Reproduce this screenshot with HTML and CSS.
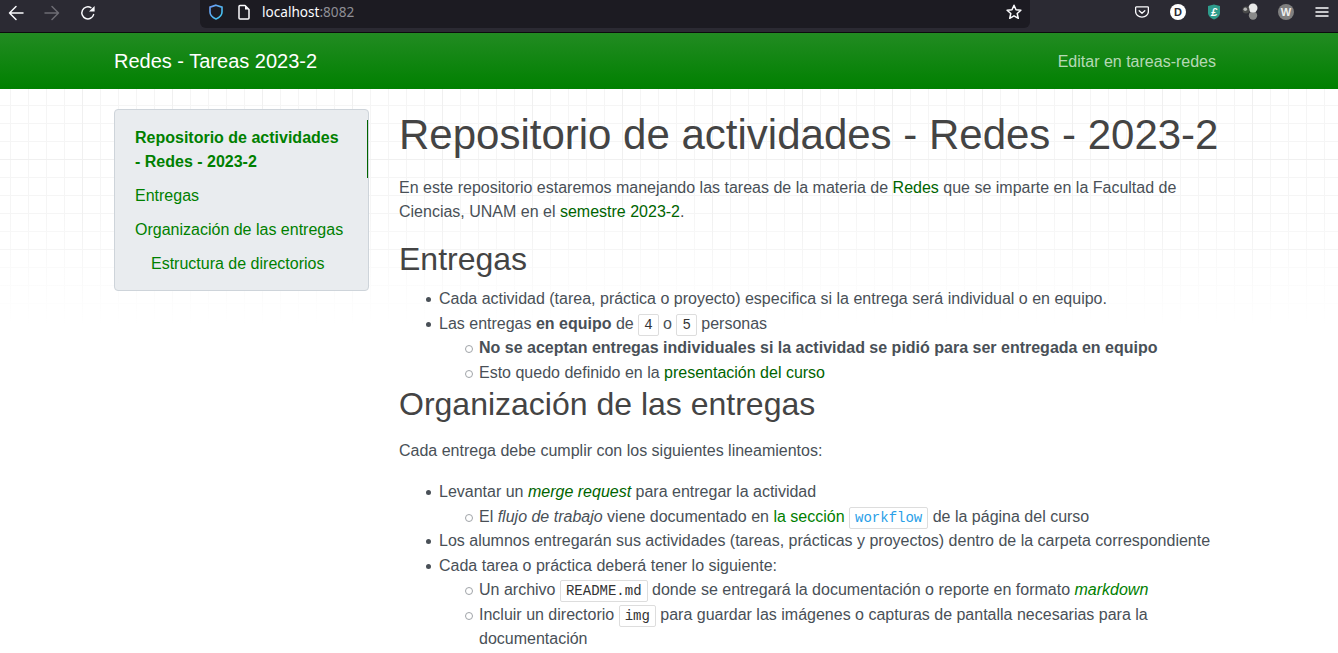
FILE: index.html
```html
<!DOCTYPE html>
<html lang="es">
<head>
<meta charset="utf-8">
<title>Redes - Tareas 2023-2</title>
<link rel="stylesheet" href="styles.css">
</head>
<body>
<div class="browser-bar">
  <span class="tool"><svg width="16" height="16" viewBox="0 0 16 16" class="ico"><path d="M15 8H1.500M8 1.500 1.500 8 8 14.500"/></svg></span>
  <span class="tool"><svg width="16" height="16" viewBox="0 0 16 16" class="ico dim"><path d="M1 8h13.500M8 1.500 14.500 8 8 14.500"/></svg></span>
  <span class="tool"><svg width="16" height="16" viewBox="0 0 16 16" class="ico"><path d="M13.600 9.600A6 6 0 1 1 10.900 2.700"/><path class="fill" d="M14.600 1v5.600H9z"/></svg></span>
  <div class="urlbar">
    <svg width="16" height="16" viewBox="0 0 16 16" class="shield"><defs><linearGradient id="sg" x1="0" y1="0" x2="1" y2="1"><stop offset="0" stop-color="#6f9cf5"/><stop offset="1" stop-color="#3cc8ee"/></linearGradient></defs><path stroke="url(#sg)" d="M8 1.200 14 3.200V8c0 3.400-2.600 5.600-6 7-3.400-1.400-6-3.600-6-7V3.200z"/></svg>
    <svg width="16" height="16" viewBox="0 0 16 16" class="ico doc"><path d="M3 2.500A1 1 0 0 1 4 1.500h5l4 4v8.500a1 1 0 0 1-1 1H4a1 1 0 0 1-1-1z"/><path class="fill" d="M9 1.500l4 4H9z"/></svg>
    <span class="url">localhost<span class="port">:8082</span></span>
    <svg width="16" height="16" viewBox="0 0 16 16" class="ico star"><path d="M8 1.200 10 5.700l4.900.5-3.700 3.300 1.100 4.800L8 11.800l-4.300 2.500 1.100-4.800L1.100 6.200 6 5.700z"/></svg>
  </div>
  <span class="tool ext"><svg width="14" height="14" viewBox="0 0 16 16" class="ico"><path d="M1.500 2.200h13a.8.8 0 0 1 .8.8v4.500c0 3.700-3.300 6.300-7.300 6.300S.7 11.200.7 7.500V3a.8.8 0 0 1 .8-.8z"/><path d="M4.800 6.500 8 9.500l3.200-3"/></svg></span>
  <span class="tool ext"><span class="badge white">D</span></span>
  <span class="tool ext"><svg width="14" height="16" viewBox="0 0 14 16" class="lshield"><path d="M1 2 7 .5 13 2v7c0 3-3 5.300-6 6.500C4 14.300 1 12 1 9z"/><text x="7" y="11.500" class="lsign">£</text></svg></span>
  <span class="tool ext"><svg width="18" height="18" viewBox="0 0 18 18"><circle cx="12" cy="12.500" r="4.200" fill="#8a8a8a"/><circle cx="12" cy="5" r="4.500" fill="#e8e8e8"/><circle cx="5" cy="7" r="3.500" fill="#4a4a4a"/><circle cx="4.300" cy="6.300" r="1.800" fill="#b5b5b5"/></svg></span>
  <span class="tool ext"><span class="badge gray">W</span></span>
  <span class="tool ext"><svg width="16" height="16" viewBox="0 0 16 16" class="ico"><path d="M2 4h12M2 8h12M2 12h12"/></svg></span>
</div>

<header class="site-nav">
  <div class="site-nav-inner">
    <a class="brand" href="#">Redes - Tareas 2023-2</a>
    <a class="edit" href="#">Editar en tareas-redes</a>
  </div>
</header>

<div class="page">
  <aside class="toc">
    <ul class="toc-list">
      <li><a class="toc-link active" href="#">Repositorio de actividades - Redes - 2023-2</a></li>
      <li><a class="toc-link" href="#">Entregas</a></li>
      <li><a class="toc-link" href="#">Organización de las entregas</a></li>
      <li><a class="toc-link sub" href="#">Estructura de directorios</a></li>
    </ul>
  </aside>
  <main class="content">
    <h1>Repositorio de actividades - Redes - 2023-2</h1>
    <p>En este repositorio estaremos manejando las tareas de la materia de <a href="#">Redes</a> que se imparte en la Facultad de Ciencias, UNAM en el <a href="#">semestre 2023-2</a>.</p>
    <h2 class="h-entregas">Entregas</h2>
    <ul>
      <li>Cada actividad (tarea, práctica o proyecto) especifica si la entrega será individual o en equipo.</li>
      <li>Las entregas <strong>en equipo</strong> de <code>4</code> o <code>5</code> personas
        <ul>
          <li><strong>No se aceptan entregas individuales si la actividad se pidió para ser entregada en equipo</strong></li>
          <li>Esto quedo definido en la <a href="#">presentación del curso</a></li>
        </ul>
      </li>
    </ul>
    <h2 class="h-org">Organización de las entregas</h2>
    <p class="lead-in">Cada entrega debe cumplir con los siguientes lineamientos:</p>
    <ul>
      <li>Levantar un <a href="#"><em>merge request</em></a> para entregar la actividad
        <ul>
          <li>El <em>flujo de trabajo</em> viene documentado en <a class="visited" href="#">la sección</a> <a href="#"><code class="link-code">workflow</code></a> de la página del curso</li>
        </ul>
      </li>
      <li>Los alumnos entregarán sus actividades (tareas, prácticas y proyectos) dentro de la carpeta correspondiente</li>
      <li>Cada tarea o práctica deberá tener lo siguiente:
        <ul>
          <li>Un archivo <code>README.md</code> donde se entregará la documentación o reporte en formato <a class="visited" href="#"><em>markdown</em></a></li>
          <li>Incluir un directorio <code>img</code> para guardar las imágenes o capturas de pantalla necesarias para la documentación</li>
        </ul>
      </li>
    </ul>
  </main>
</div>
</body>
</html>
```
FILE: styles.css
```css
* { box-sizing: border-box; }
html, body { margin: 0; height: 653px; overflow: hidden; }
body {
  font-family: "Liberation Sans", Arial, sans-serif;
  font-size: 16px;
  line-height: 24.5px;
  color: #495057;
  background-color: #fff;
  background-image:
    linear-gradient(to bottom, rgba(255,255,255,0) 210px, #fff 325px),
    linear-gradient(to right, #f0f0f0 1px, transparent 1px),
    linear-gradient(to bottom, #f0f0f0 1px, transparent 1px),
    linear-gradient(to right, #f5f5f5 1px, transparent 1px),
    linear-gradient(to bottom, #f5f5f5 1px, transparent 1px);
  background-size: 100% 100%, 90px 90px, 90px 90px, 18px 18px, 18px 18px;
  background-position: 0 0, -8px 15px, 0 69px, 10px 15px, 0 15px;
}

/* browser chrome */
.browser-bar {
  display: flex;
  gap: 4px;
  height: 33px;
  background: #2b2a33;
  border-bottom: 1px solid #0c0c0d;
}
.tool {
  width: 32px;
  height: 26px;
  flex: none;
  display: flex;
  align-items: center;
  justify-content: center;
}
.tool.ext { height: 24px; }
.ico { flex: none; fill: none; stroke: #fbfbfe; stroke-width: 1.5; stroke-linejoin: round; stroke-linecap: round; }
.ico .fill { fill: #fbfbfe; stroke: none; }
.ico.dim { stroke: #6d6c74; }
.urlbar {
  flex: none;
  width: 830px;
  height: 28px;
  margin-left: 92px;
  margin-right: 92px;
  padding: 0 8px 4px;
  display: flex;
  align-items: center;
  gap: 12px;
  background: #1c1b22;
  border-radius: 0 0 6px 6px;
}
.shield { flex: none; fill: none; stroke-width: 1.6; }
.url {
  font-family: "Noto Sans", sans-serif;
  font-size: 13.6px;
  color: #fbfbfe;
  margin-left: -2px;
  line-height: 20px;
}
.port { color: #8f8f96; }
.star { margin-left: auto; }
.badge {
  width: 16px;
  height: 16px;
  border-radius: 50%;
  font-size: 11px;
  font-weight: 700;
  line-height: 16px;
  text-align: center;
}
.badge.white { background: #fff; color: #2b2a33; }
.badge.gray { background: #808080; color: #eee; }
.lshield { fill: #2e9c8c; }
.lsign { fill: #fff; font-size: 11px; font-weight: 700; font-style: italic; text-anchor: middle; }

/* site header */
.site-nav {
  height: 56px;
  background: linear-gradient(to bottom, #228b22, #008000);
}
.site-nav-inner {
  width: 1110px;
  height: 100%;
  margin: 0 auto;
  padding-right: 8px;
  display: flex;
  align-items: center;
  justify-content: space-between;
}
.brand { font-size: 20px; color: #fff; text-decoration: none; }
.edit { padding-top: 2px; color: rgba(255,255,255,.7); text-decoration: none; }

/* layout */
.page {
  width: 1110px;
  margin: 0 auto;
  display: flex;
  gap: 30px;
  align-items: flex-start;
}
.toc {
  flex: none;
  width: 255px;
  margin-top: 20px;
  padding: 10px 0;
  background: #e9ecef;
  border: 1px solid #ced4da;
  border-radius: 4px;
}
.toc-list { margin: 0; padding: 0; list-style: none; }
.toc-link {
  display: block;
  padding: 6px 20px 4px;
  line-height: 24px;
  color: #008000;
  text-decoration: none;
}
.toc-link.active { font-weight: 700; border-right: 1px solid #006400; }
.toc-link.sub { padding-left: 36px; }

.content { flex: none; width: 825px; padding-top: 21px; }
.content a { color: #006400; text-decoration: none; }
.content a.visited { color: #008000; }
h1, h2 { margin: 0; font-weight: 400; color: #444; line-height: 1.2; }
h1 { font-size: 42px; margin-bottom: 16px; }
h2 { font-size: 32px; }
.h-entregas { margin-top: 16px; margin-bottom: 8.4px; }
.h-org { margin-bottom: 15.6px; }
p { margin: 0 0 16px; line-height: 24px; }
.content ul { margin: 0; padding-left: 40px; list-style: none; }
.content li { position: relative; }
.content li::before {
  content: "";
  position: absolute;
  left: -13px;
  top: 10px;
  width: 5px;
  height: 5px;
  border-radius: 50%;
  background: #495057;
}
.content li li::before {
  left: -14px;
  top: 9px;
  width: 6px;
  height: 6px;
  background: transparent;
  border: 1px solid #a0a4a8;
}
.lead-in + ul { margin-top: 17px; }
code {
  font-family: "Liberation Mono", monospace;
  font-size: 14px;
  line-height: 1;
  padding: 2px 5px;
  color: #333;
  background: #fff;
  border: 1px solid #ddd;
  border-radius: 2px;
}
.link-code { color: #2a9fe8; }
```
